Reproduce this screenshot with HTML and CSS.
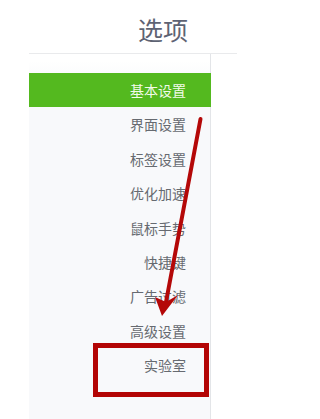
FILE: index.html
```html
<!DOCTYPE html>
<html lang="zh-CN">
<head>
<meta charset="utf-8">
<link rel="stylesheet" href="styles.css">
</head>
<body>
<div class="page">
  <header class="header">
    <h1 class="title">选项</h1>
  </header>
  <nav class="sidebar">
    <div class="item active">基本设置</div>
    <div class="item">界面设置</div>
    <div class="item">标签设置</div>
    <div class="item">优化加速</div>
    <div class="item">鼠标手势</div>
    <div class="item">快捷键</div>
    <div class="item">广告过滤</div>
    <div class="item">高级设置</div>
    <div class="item">实验室</div>
  </nav>
  <div class="highlight-box"></div>
  <svg class="arrow" width="237" height="419" viewBox="0 0 237 419">
    <line x1="200.5" y1="119" x2="166" y2="302" stroke="#b40808" stroke-width="4" stroke-linecap="round"/>
    <polygon points="162,316 155,297 166,302 178,295" fill="#b40808"/>
  </svg>
</div>
</body>
</html>
```
FILE: styles.css
```css
html, body {
  margin: 0;
  padding: 0;
  background: #ffffff;
}
body {
  font-family: "Noto Sans CJK SC", "Noto Sans", sans-serif;
  width: 237px;
  height: 419px;
  overflow: hidden;
}
.page {
  position: relative;
  width: 237px;
  height: 419px;
  display: flex;
  flex-direction: column;
}
.header {
  margin-left: 29px;
  height: 54px;
  box-sizing: border-box;
  border-bottom: 1px solid #e9eaec;
  padding-top: 17px;
  padding-left: 109px;
}
.title {
  margin: 0;
  font-size: 25px;
  line-height: 25px;
  font-weight: 400;
  color: #5e6373;
  letter-spacing: 0;
}
.sidebar {
  flex: 1;
  margin-left: 29px;
  width: 182px;
  box-sizing: border-box;
  background: linear-gradient(#ffffff 0, #ffffff 7px, #f8f9fb 30px);
  border-right: 1px solid #e3e5e8;
  padding-top: 19px;
  display: flex;
  flex-direction: column;
}
.item {
  height: 34.4px;
  line-height: 34.4px;
  text-align: right;
  padding-right: 24px;
  font-size: 14px;
  color: #666a70;
}
.item.active {
  background: #54b91f;
  color: #f2fbe9;
  margin-right: -1px;
  padding-right: 25px;
}
.highlight-box {
  position: absolute;
  left: 93px;
  top: 343px;
  width: 116px;
  height: 54px;
  box-sizing: border-box;
  border: 5px solid #b30505;
}
.arrow {
  position: absolute;
  left: 0;
  top: 0;
  pointer-events: none;
}
```
